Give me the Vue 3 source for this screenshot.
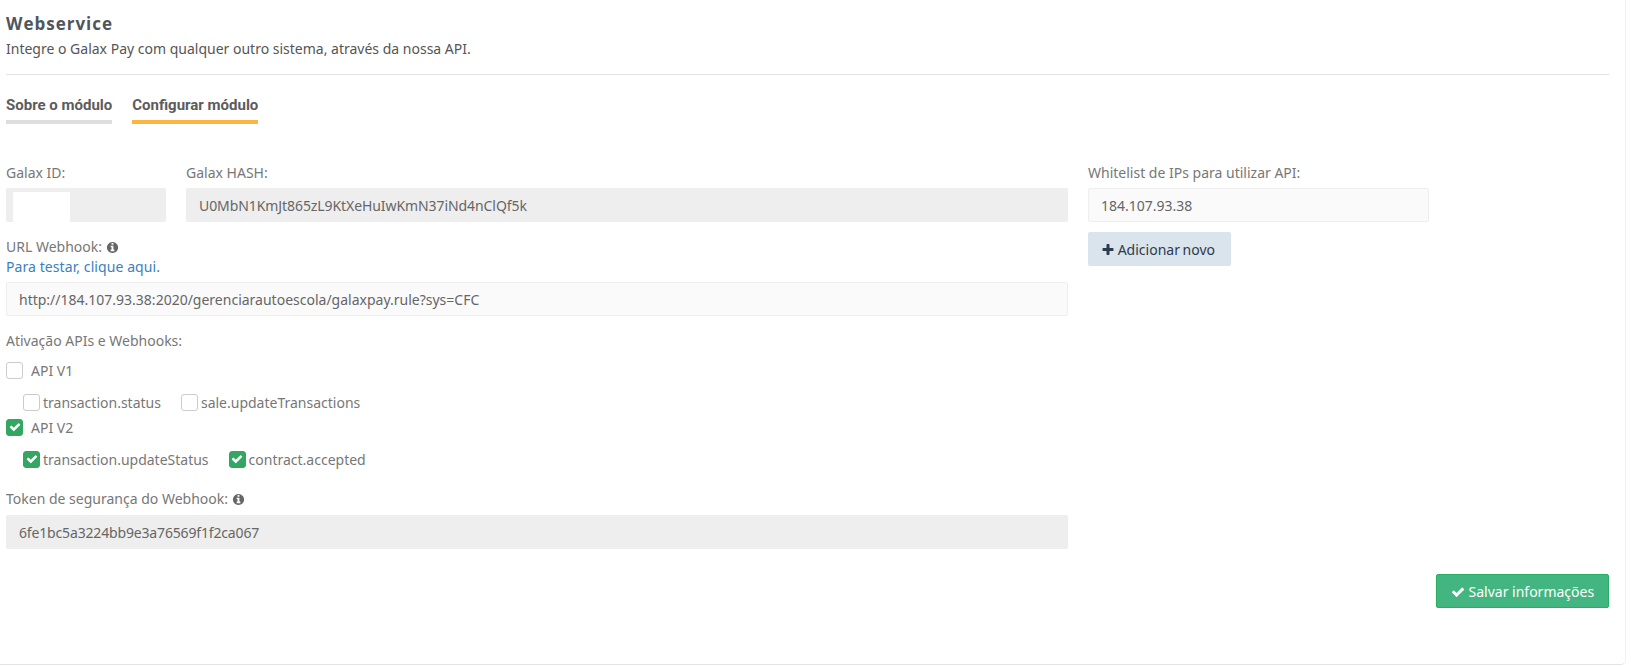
<script setup>
const check = 'M1671 566q0 40-28 68l-724 724-136 136q-28 28-68 28t-68-28l-136-136-362-362q-28-28-28-68t28-68l136-136q28-28 68-28t68 28l294 295 656-657q28-28 68-28t68 28l136 136q28 28 28 68z'
const plus = 'M1600 736v192q0 40-28 68t-68 28h-416v416q0 40-28 68t-68 28h-192q-40 0-68-28t-28-68v-416h-416q-40 0-68-28t-28-68v-192q0-40 28-68t68-28h416v-416q0-40 28-68t68-28h192q40 0 68 28t28 68v416h416q40 0 68 28t28 68z'
const info = 'M1152 1376v-160q0-14-9-23t-23-9h-96v-512q0-14-9-23t-23-9h-320q-14 0-23 9t-9 23v160q0 14 9 23t23 9h96v320h-96q-14 0-23 9t-9 23v160q0 14 9 23t23 9h448q14 0 23-9t9-23zm-128-896v-160q0-14-9-23t-23-9h-192q-14 0-23 9t-9 23v160q0 14 9 23t23 9h192q14 0 23-9t9-23zm640 416q0 209-103 385.5t-279.5 279.5-385.5 103-385.5-103-279.5-279.5-103-385.5 103-385.5 279.5-279.5 385.5-103 385.5 103 279.5 279.5 103 385.5z'
</script>

<template>
  <div class="card">
    <h1 class="title">Webservice</h1>
    <p class="sub">Integre o Galax Pay com qualquer outro sistema, através da nossa API.</p>
    <hr class="rule" />
    <div class="tabs">
      <a class="tab">Sobre o módulo</a>
      <a class="tab active">Configurar módulo</a>
    </div>

    <div class="grid">
      <div class="left">
        <div class="row">
          <div class="field id">
            <label class="lbl">Galax ID:</label>
            <div class="box grey idbox"><span class="mask"></span></div>
          </div>
          <div class="field hash">
            <label class="lbl">Galax HASH:</label>
            <div class="box grey hashval">U0MbN1KmJt865zL9KtXeHuIwKmN37iNd4nClQf5k</div>
          </div>
        </div>

        <div class="url">
          <div class="lbl">URL Webhook: <svg class="ic" viewBox="0 0 1792 1792"><path :d="info" /></svg></div>
          <a class="link">Para testar, clique aqui.</a>
          <div class="box light">http://184.107.93.38:2020/gerenciarautoescola/galaxpay.rule?sys=CFC</div>
        </div>

        <div class="lbl act">Ativação APIs e Webhooks:</div>
        <div class="chk top first"><span class="cb"></span><span class="tx">API V1</span></div>
        <div class="subs s1">
          <div class="chk"><span class="cb"></span>transaction.status</div>
          <div class="chk"><span class="cb"></span>sale.updateTransactions</div>
        </div>
        <div class="chk top second">
          <span class="cb on"><svg viewBox="0 0 1792 1792"><path :d="check" /></svg></span><span class="tx">API V2</span>
        </div>
        <div class="subs s2">
          <div class="chk"><span class="cb on"><svg viewBox="0 0 1792 1792"><path :d="check" /></svg></span>transaction.updateStatus</div>
          <div class="chk"><span class="cb on"><svg viewBox="0 0 1792 1792"><path :d="check" /></svg></span>contract.accepted</div>
        </div>

        <div class="token">
          <div class="lbl">Token de segurança do Webhook: <svg class="ic" viewBox="0 0 1792 1792"><path :d="info" /></svg></div>
          <div class="box grey tokenval">6fe1bc5a3224bb9e3a76569f1f2ca067</div>
        </div>
      </div>

      <div class="right">
        <label class="lbl">Whitelist de IPs para utilizar API:</label>
        <div class="box light">184.107.93.38</div>
        <button class="btn add"><svg viewBox="0 0 1792 1792"><path :d="plus" /></svg> Adicionar novo</button>
      </div>
    </div>

    <div class="foot">
      <button class="btn save"><svg viewBox="0 0 1792 1792"><path :d="check" /></svg> Salvar informações</button>
    </div>
  </div>
</template>

<style scoped>
.card {
  box-sizing: border-box;
  height: 665px;
  padding: 0 16px 0 6px;
  margin-right: 5px;
  border-bottom: 1px solid #e4e4e4;
  border-right: 1px solid #f2f2f2;
  border-bottom-right-radius: 5px;
  background: #fff;
  font-family: "Noto Sans", "Open Sans", sans-serif;
  font-size: 14px;
  color: #777;
}
.title {
  margin: 0;
  padding-top: 14px;
  font: 700 17px/20px "Open Sans", sans-serif;
  letter-spacing: 1px;
  color: #50555c;
}
.sub {
  margin: 5px 0 0;
  font-size: 14px;
  line-height: 20px;
  color: #555;
}
.rule {
  margin: 15px 0 0;
  border: 0;
  border-top: 1px solid #e2e2e2;
}
.tabs {
  display: flex;
  gap: 20px;
  margin-top: 20px;
}
.tab {
  padding-bottom: 5px;
  border-bottom: 4px solid #ddd;
  font: 700 15px/20px Roboto, sans-serif;
  color: #5c5c5c;
}
.tab.active {
  border-bottom-color: #fbb540;
}
.grid {
  display: flex;
  margin-top: 39px;
}
.left {
  width: 1062px;
}
.right {
  margin-left: 20px;
  width: 341px;
}
.row {
  display: flex;
  gap: 20px;
}
.field.id {
  width: 160px;
}
.field.hash {
  flex: 1;
}
.lbl {
  display: block;
  font-size: 14px;
  line-height: 20px;
  color: #777;
}
.box {
  box-sizing: border-box;
  height: 34px;
  margin-top: 5px;
  padding: 0 13px;
  border-radius: 2px;
  font-size: 14px;
  color: #666;
}
.grey {
  background: #eee;
  line-height: 35px;
}
.hashval {
  letter-spacing: -0.08px;
}
.tokenval {
  letter-spacing: -0.16px;
}
.light {
  padding: 0 12px;
  background: #fafafa;
  border: 1px solid #eee;
  line-height: 33px;
}
.idbox {
  display: flex;
  padding: 4px 0 0 7px;
}
.mask {
  width: 57px;
  height: 30px;
  background: #fff;
}
.url {
  margin-top: 15px;
}
.link {
  display: block;
  line-height: 20px;
  letter-spacing: 0.08px;
  color: #3a80bd;
}
.url .box {
  margin-top: 5px;
}
.act {
  margin-top: 15px;
}
.chk {
  display: flex;
  align-items: center;
  height: 18px;
  color: #777;
}
.cb {
  box-sizing: border-box;
  display: flex;
  align-items: center;
  justify-content: center;
  flex: none;
  width: 17px;
  height: 17px;
  margin-right: 3px;
  background: #fff;
  border: 1px solid #ccc;
  border-radius: 3px;
}
.cb.on {
  background: #33a661;
  border-color: #33a661;
}
.cb svg {
  width: 12px;
  height: 12px;
  fill: #fff;
}
.top .cb {
  margin-right: 8px;
}
.first {
  margin-top: 10px;
}
.subs {
  display: flex;
  gap: 20px;
  padding-left: 17px;
}
.s1 {
  margin-top: 14px;
}
.second {
  margin-top: 7px;
}
.s2 {
  margin-top: 14px;
}
.token {
  margin-top: 21px;
}
.token .box {
  margin-top: 6px;
}
.ic {
  width: 13px;
  height: 13px;
  fill: #666;
  vertical-align: -2px;
}
.btn {
  display: block;
  box-sizing: border-box;
  height: 34px;
  border-radius: 2px;
  font: 14px "Noto Sans", "Open Sans", sans-serif;
  cursor: pointer;
}
.btn svg {
  width: 14px;
  height: 14px;
  vertical-align: -2px;
}
.add {
  width: 143px;
  margin-top: 10px;
  padding: 0 3px 0 0;
  border: 0;
  background: #d9e4ec;
  color: #2e3a4d;
  word-spacing: -1px;
}
.add svg {
  fill: #2e3a4d;
}
.foot {
  display: flex;
  justify-content: flex-end;
  margin-top: 25px;
}
.save {
  width: 173px;
  padding: 0;
  border: 1px solid #27ae60;
  background: #43b581;
  color: #fff;
}
.save svg {
  fill: #fff;
}
</style>
